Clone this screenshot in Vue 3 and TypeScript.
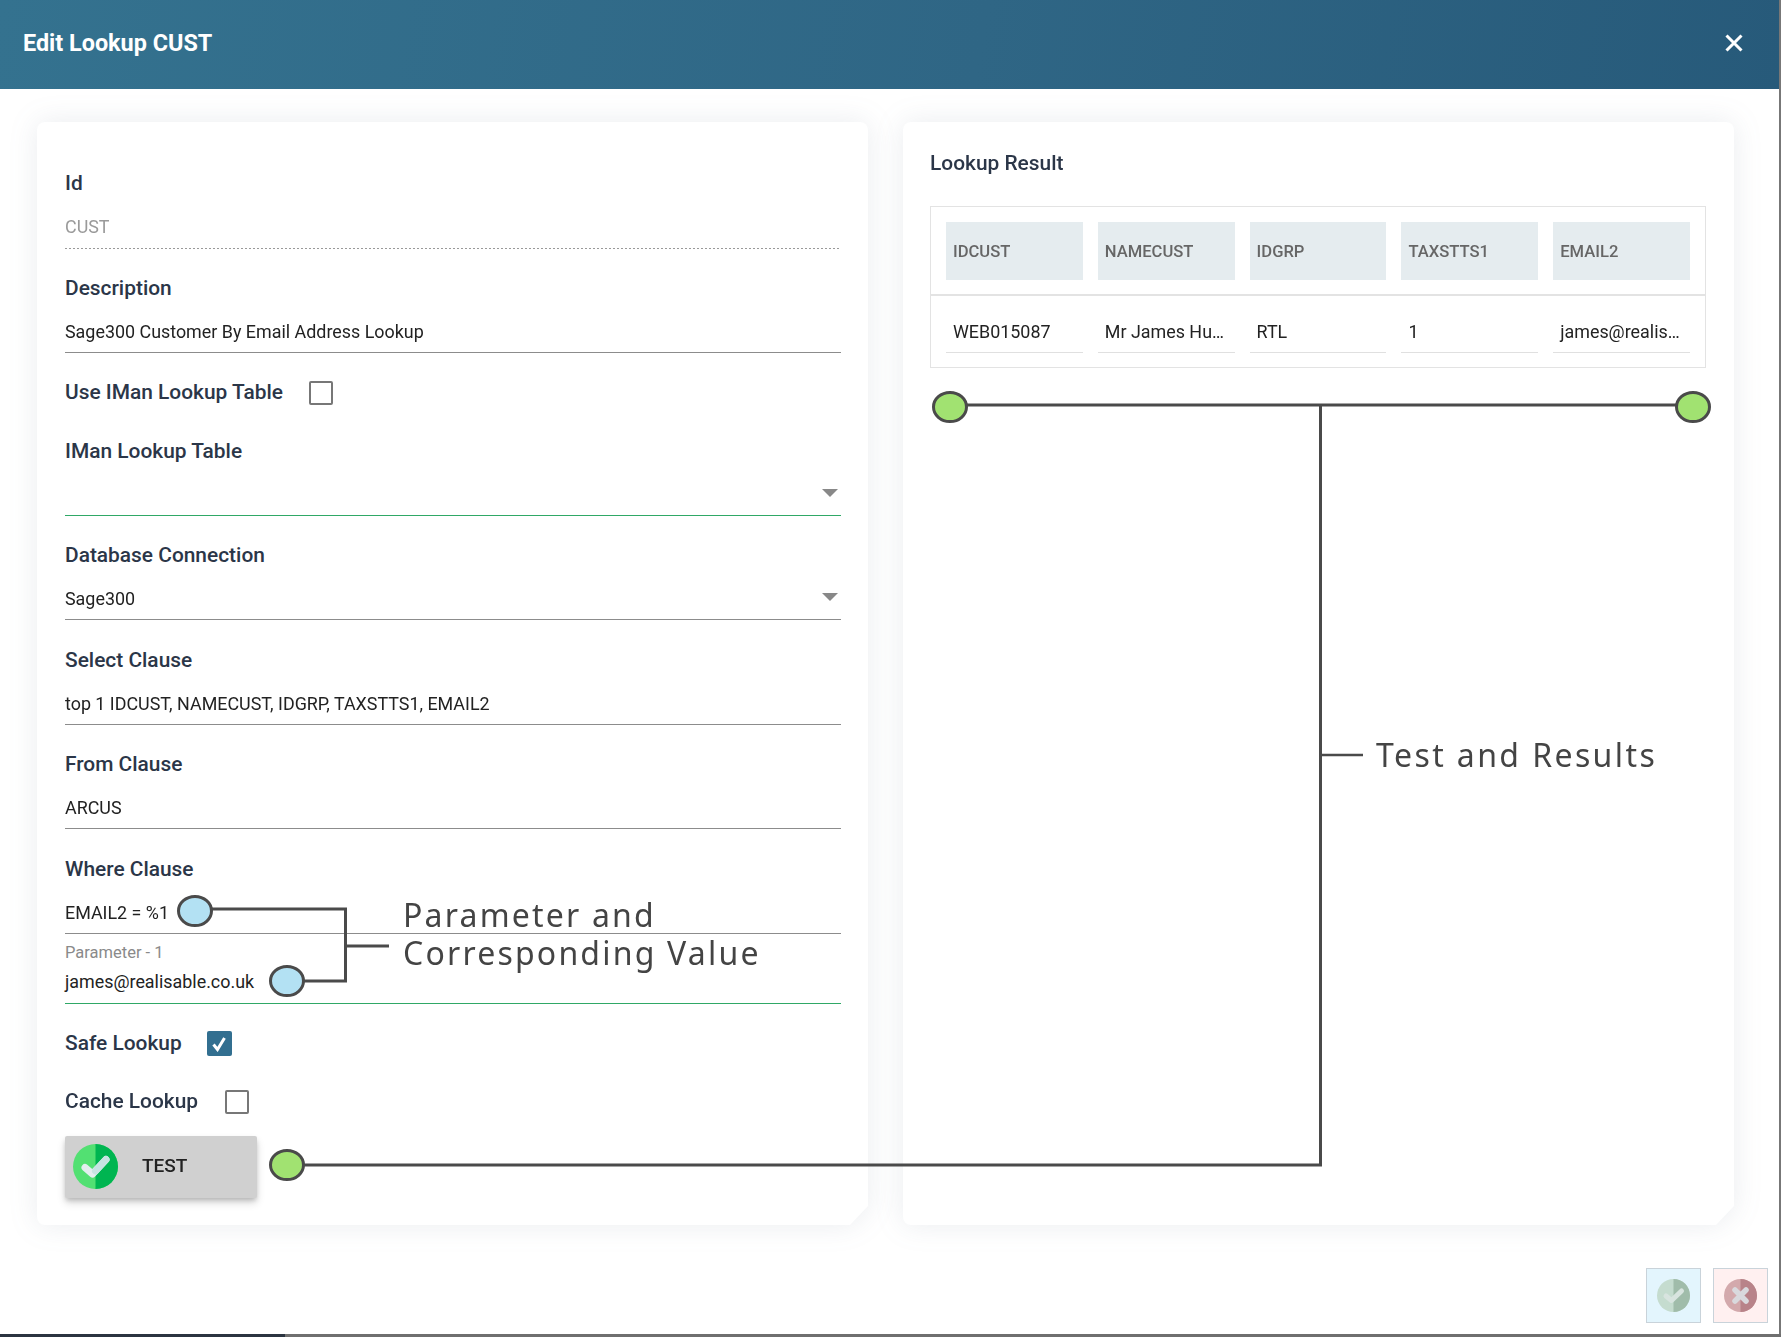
<template>
  <div class="page">
    <header class="top-bar">
      <h1 class="top-title">Edit Lookup CUST</h1>
      <button class="close-btn" aria-label="Close">
        <svg width="20" height="20" viewBox="0 0 20 20" fill="none" stroke="#fff" stroke-width="3"><path d="M2.5 2.5l15 15M17.5 2.5l-15 15" /></svg>
      </button>
    </header>

    <main class="cards">
      <div class="card-shadow">
        <section class="card form-card">
          <div class="field">
            <label class="field-label">Id</label>
            <div class="field-value readonly">CUST</div>
          </div>
          <div class="field">
            <label class="field-label">Description</label>
            <div class="field-value">Sage300 Customer By Email Address Lookup</div>
          </div>
          <div class="check-row first-check">
            <span class="field-label">Use IMan Lookup Table</span>
            <span class="check"></span>
          </div>
          <div class="field">
            <label class="field-label">IMan Lookup Table</label>
            <div class="field-value select focused"><span class="caret"></span></div>
          </div>
          <div class="field">
            <label class="field-label">Database Connection</label>
            <div class="field-value select">Sage300<span class="caret"></span></div>
          </div>
          <div class="field">
            <label class="field-label">Select Clause</label>
            <div class="field-value">top 1 IDCUST, NAMECUST, IDGRP, TAXSTTS1, EMAIL2</div>
          </div>
          <div class="field">
            <label class="field-label">From Clause</label>
            <div class="field-value">ARCUS</div>
          </div>
          <div class="field">
            <label class="field-label">Where Clause</label>
            <div class="field-value">EMAIL2 = %1</div>
          </div>
          <div class="param">
            <div class="param-label">Parameter - 1</div>
            <div class="param-value">james@realisable.co.uk</div>
          </div>
          <div class="check-row safe-row">
            <span class="field-label">Safe Lookup</span>
            <span class="check checked">
              <svg width="18" height="16" viewBox="0 0 18 16" fill="none" stroke="#fff" stroke-width="3"><path d="M3.500 8.500l4 5L14.500 2" /></svg>
            </span>
          </div>
          <div class="check-row cache-row">
            <span class="field-label">Cache Lookup</span>
            <span class="check"></span>
          </div>
          <button class="test-btn">
            <svg class="test-icon" width="45" height="45" viewBox="0 0 45 45">
              <circle cx="22.5" cy="22.5" r="22.5" fill="#52e072" />
              <path d="M22.5 0a22.5 22.5 0 0 1 0 45z" fill="#00b551" />
              <path d="M12 23.500l7.500 6.500L33 15.500" fill="none" stroke="#e3eeef" stroke-width="7" stroke-linecap="round" stroke-linejoin="round" />
              <path d="M22.5 27L33 15.500" fill="none" stroke="#c7e3e2" stroke-width="7" stroke-linecap="round" />
            </svg>
            <span class="test-text">TEST</span>
          </button>
        </section>
      </div>

      <div class="card-shadow">
        <section class="card result-card">
          <h2 class="field-label result-title">Lookup Result</h2>
          <div class="result-table">
            <div class="table-head">
              <div v-for="col in columns" :key="col" class="head-cell">{{ col }}</div>
            </div>
            <div class="table-row">
              <div v-for="(val, i) in row" :key="i" class="row-cell">{{ val }}</div>
            </div>
          </div>
        </section>
      </div>
    </main>

    <footer class="actions">
      <button class="action-btn ok" aria-label="Save">
        <svg width="33" height="33" viewBox="0 0 33 33">
          <circle cx="16.5" cy="16.5" r="16.5" fill="#c5dccf" />
          <path d="M16.5 0a16.5 16.5 0 0 1 0 33z" fill="#a0bcaa" />
          <path d="M9 17l5.500 4.500L24.500 12" fill="none" stroke="#d8e4df" stroke-width="5" stroke-linecap="round" stroke-linejoin="round" />
        </svg>
      </button>
      <button class="action-btn cancel" aria-label="Cancel">
        <svg width="33" height="33" viewBox="0 0 33 33">
          <circle cx="16.5" cy="16.5" r="16.5" fill="#d3a9ac" />
          <path d="M16.5 0a16.5 16.5 0 0 1 0 33z" fill="#b88389" />
          <path d="M11 11l11 11M22 11L11 22" fill="none" stroke="#d9d9dd" stroke-width="5.5" stroke-linecap="round" />
        </svg>
      </button>
    </footer>

    <!-- annotation layer drawn over the screenshot -->
    <svg class="notes" width="1781" height="1337" viewBox="0 0 1781 1337" fill="none" stroke="#4a4a4a">
      <g stroke-width="3">
        <path d="M212 909H345.500V981H304M345.500 946H389" />
        <path d="M966 405H1677" />
        <path d="M304 1165H1320.500V405" />
      </g>
      <path d="M1320 755H1363" stroke-width="2.500" />
      <g stroke-width="3">
        <ellipse cx="195" cy="911" rx="16.500" ry="14.500" fill="#b3e1f3" />
        <ellipse cx="287" cy="981" rx="16.500" ry="14.500" fill="#b3e1f3" />
        <ellipse cx="287" cy="1165" rx="16.500" ry="14.500" fill="#a1e271" />
        <ellipse cx="950" cy="407" rx="16.500" ry="14.500" fill="#a1e271" />
        <ellipse cx="1693" cy="407" rx="16.500" ry="14.500" fill="#a1e271" />
      </g>
    </svg>
    <div class="note note-param">
      <div>Parameter and</div>
      <div>Corresponding Value</div>
    </div>
    <div class="note note-test">Test and Results</div>

    <div class="scroll-v"></div>
    <div class="scroll-h"><div class="scroll-thumb"></div></div>
  </div>
</template>

<script setup lang="ts">
const columns: string[] = ['IDCUST', 'NAMECUST', 'IDGRP', 'TAXSTTS1', 'EMAIL2'];
const row: string[] = ['WEB015087', 'Mr James Hu…', 'RTL', '1', 'james@realis…'];
</script>

<style>
html, body { margin: 0; background: #fff; }
</style>

<style scoped>
.page { position: relative; width: 1781px; height: 1337px; overflow: hidden; background: #fff; font-family: Roboto, sans-serif; color: #212529; }
.top-bar { display: flex; align-items: center; justify-content: space-between; height: 89px; padding: 1px 37px 4px 23px; box-sizing: border-box; background: linear-gradient(100deg, #34728f 0%, #2f6685 55%, #275a7a 100%); }
.top-title { margin: 0; font-size: 23.400px; font-weight: 700; color: #fff; }
.close-btn { display: flex; padding: 0; border: 0; background: none; }

.cards { display: flex; gap: 35px; padding: 33px 0 0 37px; }
.card-shadow { width: 831px; height: 1103px; filter: drop-shadow(0 0 14px rgba(80, 100, 120, 0.12)); }
.card { box-sizing: border-box; height: 100%; background: #fff; border-radius: 8px; clip-path: polygon(0 0, 100% 0, 100% 1084px, 813px 100%, 0 100%); }
.form-card { padding: 48px 27px 0 28px; }
.result-card { padding: 28px 28px 0 27px; }

.field { height: 104.500px; }
.field-label { display: block; height: 26px; margin: 0; font-size: 20.900px; line-height: 26px; font-weight: 500; color: #2b3648; }
.field-value { position: relative; box-sizing: border-box; height: 52px; padding-top: 18px; border-bottom: 1px solid #8c8c8c; font-size: 17.900px; line-height: 26px; color: #222; }
.field-value.readonly { color: #9a9a9a; border-bottom: 0; height: 53px; padding-top: 18px; background: repeating-linear-gradient(to right, #999 0 2px, transparent 2px 4px) left bottom / 100% 1px no-repeat; }
.field-value.focused { border-bottom-color: #2fa866; }
.caret { position: absolute; right: 3px; top: 25px; width: 0; height: 0; border: 8.500px solid transparent; border-top: 8.500px solid #888; border-bottom: 0; }

.check-row { display: flex; align-items: center; gap: 26px; }
.first-check { height: 26px; margin-bottom: 32.500px; }
.check-row .check { margin-top: 2px; }
.check-row .field-label { display: inline; }
.check { display: flex; align-items: center; justify-content: center; box-sizing: border-box; width: 24px; height: 24px; border: 2px solid #777; border-radius: 2px; background: #fff; }
.check.checked { width: 25px; height: 25px; border: 0; background: #326f90; }

.param { margin-top: -19.500px; }
.param-label { height: 24px; font-size: 16.500px; line-height: 24px; font-weight: 400; color: #8a8a8a; }
.param-value { box-sizing: border-box; height: 39px; padding-top: 4px; border-bottom: 1px solid #2fa866; font-size: 17.900px; line-height: 26px; color: #222; }
.safe-row { margin-top: 26px; height: 26px; gap: 25px; }
.cache-row { margin-top: 32px; height: 26px; gap: 27px; }

.test-btn { display: flex; align-items: center; gap: 24px; width: 192px; height: 62px; margin-top: 22px; padding: 0 0 0 8px; box-sizing: border-box; border: 0; border-radius: 2px; background: #d0d0d0; box-shadow: 0 3px 5px -1px rgba(0, 0, 0, 0.2), 0 5px 8px 0 rgba(0, 0, 0, 0.14); font-family: Roboto, sans-serif; font-size: 19px; font-weight: 500; color: #222; }
.test-text { margin-bottom: 3px; }

.result-title { height: 26px; }
.result-table { margin-top: 30px; box-sizing: border-box; width: 776px; height: 162px; border: 1px solid #e3e3e3; }
.table-head, .table-row { display: grid; grid-template-columns: repeat(5, 136.800px); gap: 15px; padding: 0 15px; }
.table-head { height: 89px; padding-top: 15px; box-sizing: border-box; border-bottom: 2px solid #e3e3e3; }
.head-cell { height: 58px; padding-left: 7px; background: #e5ecef; font-size: 16.600px; font-weight: 500; line-height: 60px; color: #666; }
.table-row { padding-top: 18px; }
.row-cell { box-sizing: border-box; height: 39px; padding: 5px 0 0 7px; border-bottom: 1px solid #e0e0e0; font-size: 17.900px; line-height: 26px; color: #222; white-space: nowrap; }

.actions { position: absolute; right: 13px; bottom: 14px; display: flex; gap: 12px; }
.action-btn { display: flex; align-items: center; justify-content: center; box-sizing: border-box; width: 55px; height: 55px; padding: 0; border: 1.500px solid #c9d3da; }
.action-btn.ok { background: #e3f5fd; }
.action-btn.cancel { background: #fff0f0; }

.notes { position: absolute; left: 0; top: 0; pointer-events: none; }
.note { position: absolute; font-family: "Noto Sans", sans-serif; font-size: 32px; line-height: 38px; letter-spacing: 2.200px; color: #444; white-space: nowrap; }
.note-param { left: 403px; top: 896px; }
.note-test { left: 1376px; top: 736px; letter-spacing: 2.400px; }

.scroll-v { position: absolute; right: 0; top: 0; width: 2px; height: 1337px; background: #777; }
.scroll-h { position: absolute; left: 0; bottom: 0; width: 100%; height: 3px; background: #6f6f6f; }
.scroll-thumb { width: 285px; height: 100%; background: #2b3440; }
</style>
